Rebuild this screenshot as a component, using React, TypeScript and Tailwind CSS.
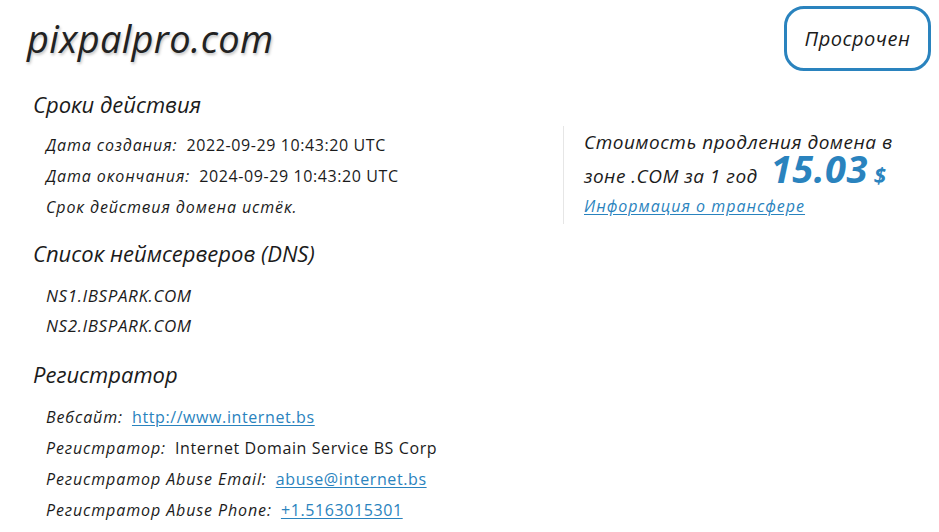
const FONT = "font-['Open_Sans','Noto_Sans',sans-serif]";

function Row({ label, children }: { label: string; children: React.ReactNode }) {
  return (
    <div className="flex h-[31px] items-center text-[16px] text-[#1b1b1b]">
      <span className="italic font-medium tracking-[0.9px]">{label}:</span>
      <span className="ml-[9px] tracking-[0.6px]">{children}</span>
    </div>
  );
}

function Link({ children }: { children: React.ReactNode }) {
  return <a className="text-[#2a83be] underline underline-offset-2">{children}</a>;
}

function Heading({ children }: { children: React.ReactNode }) {
  return <h2 className="pl-[33px] text-[22px] italic text-[#1b1b1b] leading-[30px]">{children}</h2>;
}

export default function App() {
  return (
    <div className={`${FONT} relative h-[532px] w-[939px] overflow-hidden bg-white`}>
      <div className="flex items-start justify-between pr-[8px] pt-[6px]">
        <h1 className="pl-[27px] pt-[12px] text-[38px] font-medium italic leading-[40px] tracking-[0.3px] text-[#222] [text-shadow:1px_2px_3px_rgba(0,0,0,0.25)]">
          pixpalpro.com
        </h1>
        <div className="flex h-[65px] w-[147px] items-center justify-center rounded-[20px] border-[3px] border-[#2a83be] text-[20px] italic tracking-[0.5px] text-[#1b1b1b]">
          Просрочен
        </div>
      </div>

      <div className="flex">
        <div className="w-[563px]">
          <div className="mt-[18px]">
            <Heading>Сроки действия</Heading>
          </div>
          <div className="mt-[10px] pl-[46px]">
            <Row label="Дата создания">2022-09-29 10:43:20 UTC</Row>
            <Row label="Дата окончания">2024-09-29 10:43:20 UTC</Row>
            <div className="flex h-[31px] items-center text-[16px] italic font-medium tracking-[0.9px] text-[#1b1b1b]">
              Срок действия домена истёк.
            </div>
          </div>

          <div className="mt-[16px]">
            <Heading>Список неймсерверов (DNS)</Heading>
          </div>
          <div className="mt-[13px] pl-[46px] text-[17px] italic tracking-[0.6px] text-[#1b1b1b]">
            <div className="flex h-[30px] items-center">NS1.IBSPARK.COM</div>
            <div className="flex h-[30px] items-center">NS2.IBSPARK.COM</div>
          </div>

          <div className="mt-[18px]">
            <Heading>Регистратор</Heading>
          </div>
          <div className="mt-[12px] pl-[46px]">
            <Row label="Вебсайт">
              <Link>http://www.internet.bs</Link>
            </Row>
            <Row label="Регистратор">Internet Domain Service BS Corp</Row>
            <Row label="Регистратор Abuse Email">
              <Link>abuse@internet.bs</Link>
            </Row>
            <Row label="Регистратор Abuse Phone">
              <Link>+1.5163015301</Link>
            </Row>
          </div>
        </div>

        <div className="mt-[55px] h-[98px] border-l border-[#e6e6e6] pl-[20px] pt-[1px]">
          <p className="w-[320px] text-[19px] italic leading-[31px] tracking-[0.5px] text-[#1b1b1b]">
            Стоимость продления домена в зоне .COM за 1 год
            <span className="ml-[13px] text-[38px] font-bold leading-[20px] tracking-[0.5px] text-[#2a83be]">15.03</span>
            <span className="ml-[6px] text-[22px] font-bold leading-[20px] text-[#2a83be]">$</span>
          </p>
          <a className="mt-[2px] block text-[16px] italic tracking-[1px] text-[#2a83be] underline underline-offset-2">
            Информация о трансфере
          </a>
        </div>
      </div>
    </div>
  );
}
